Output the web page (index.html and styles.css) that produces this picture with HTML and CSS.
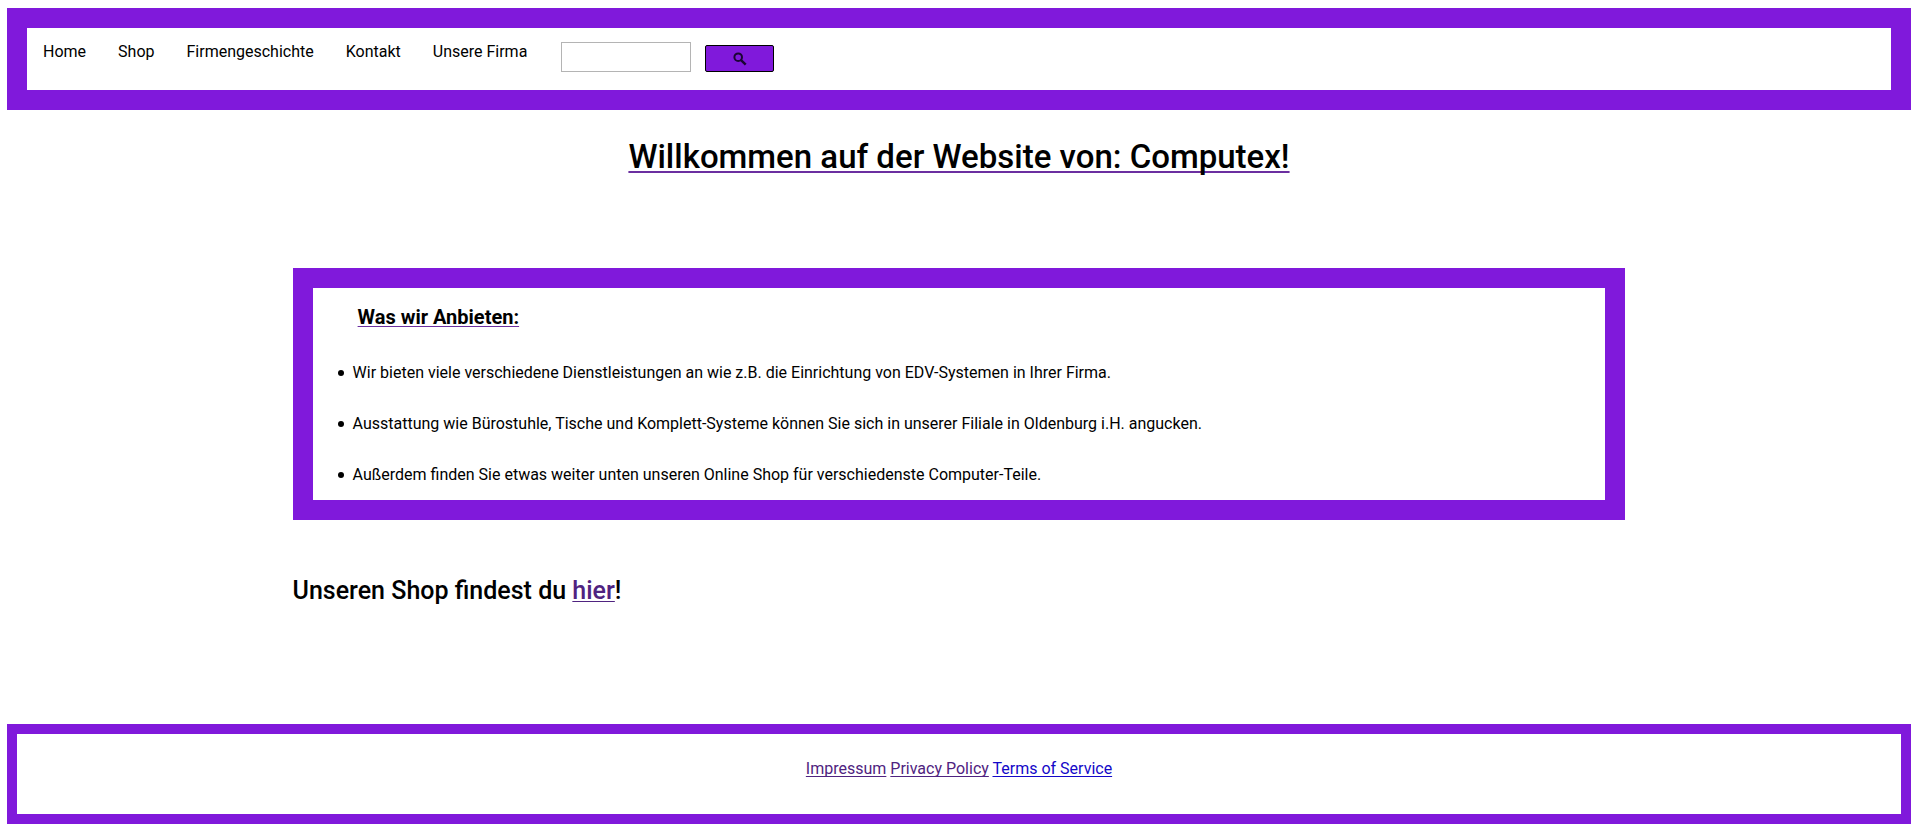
FILE: index.html
```html
<!DOCTYPE html>
<html lang="de">
<head>
<meta charset="utf-8">
<title>Computex</title>
<link rel="stylesheet" href="styles.css">
</head>
<body>
<header class="site-header">
  <nav class="nav">
    <a class="nav-link" href="#">Home</a>
    <a class="nav-link" href="#">Shop</a>
    <a class="nav-link" href="#">Firmengeschichte</a>
    <a class="nav-link" href="#">Kontakt</a>
    <a class="nav-link" href="#">Unsere Firma</a>
  </nav>
  <form class="search">
    <input class="search-input" type="text" aria-label="Suche">
    <button class="search-button" type="button" aria-label="Suchen">
      <svg class="search-icon" viewBox="0 0 14 14" aria-hidden="true">
        <circle cx="5.2" cy="5.2" r="3.8" fill="none" stroke="currentColor" stroke-width="2"/>
        <path d="M7.8 7.8L12.7 12.7" fill="none" stroke="currentColor" stroke-width="2.4"/>
      </svg>
    </button>
  </form>
</header>
<main class="content">
  <h1 class="title">Willkommen auf der Website von: Computex!</h1>
  <section class="offer">
    <h2 class="offer-title">Was wir Anbieten:</h2>
    <ul class="offer-list">
      <li class="offer-item">Wir bieten viele verschiedene Dienstleistungen an wie z.B. die Einrichtung von EDV-Systemen in Ihrer Firma.</li>
      <li class="offer-item">Ausstattung wie Bürostuhle, Tische und Komplett-Systeme können Sie sich in unserer Filiale in Oldenburg i.H. angucken.</li>
      <li class="offer-item">Außerdem finden Sie etwas weiter unten unseren Online Shop für verschiedenste Computer-Teile.</li>
    </ul>
  </section>
  <h2 class="shop-title">Unseren Shop findest du <a class="visited" href="#">hier</a>!</h2>
</main>
<footer class="site-footer">
  <a class="visited" href="#">Impressum</a>
  <a class="visited" href="#">Privacy Policy</a>
  <a class="unvisited" href="#">Terms of Service</a>
</footer>
</body>
</html>
```
FILE: styles.css
```css
* {
  box-sizing: border-box;
}

body {
  margin: 8px 7px 7px;
  background: #fff;
  color: #000;
  font: 16px/19px Roboto, sans-serif;
  text-decoration-skip-ink: none;
  text-underline-offset: 2px;
}

.site-header {
  display: flex;
  align-items: flex-start;
  gap: 18px;
  padding: 14px 0 18px;
  border: 20px solid #8019db;
}

.nav {
  display: flex;
}

.nav-link {
  padding: 0 16px;
  color: #000;
  text-decoration: none;
}

.search {
  display: flex;
  align-items: flex-end;
  gap: 14px;
}

.search-input {
  width: 130px;
  height: 30px;
  border: 1px solid #b4b4b4;
}

.search-button {
  display: flex;
  align-items: center;
  justify-content: center;
  width: 69px;
  height: 27px;
  padding: 0;
  border: 1px solid #000;
  border-radius: 2px;
  background: #8019db;
  color: #1a0533;
}

.search-icon {
  width: 14px;
  height: 14px;
}

.content {
  width: 70%;
  margin: 0 auto;
}

.title {
  margin: 28px 0 92px;
  font-size: 33px;
  line-height: 38px;
  font-weight: 500;
  text-align: center;
  text-decoration: underline 2px #6b2fa0;
  text-underline-offset: 3px;
}

.offer {
  padding: 17px 20px 16px;
  border: 20px solid #8019db;
}

.offer-title {
  margin: 0 0 33px 25px;
  font-size: 20px;
  line-height: 25px;
  font-weight: 700;
  text-decoration: underline 1px #6b2fa0;
}

.offer-list {
  display: grid;
  gap: 32px;
  margin: 0;
  padding-left: 5px;
  list-style: none;
}

.offer-item {
  display: flex;
  align-items: center;
  gap: 9px;
}

.offer-item::before {
  content: "";
  flex: none;
  width: 6px;
  height: 6px;
  border-radius: 50%;
  background: #000;
}

.shop-title {
  margin: 57px 0 119px;
  font-size: 25px;
  line-height: 28px;
  font-weight: 500;
}

.visited {
  color: #4f2380;
  text-decoration-thickness: 1px;
}

.unvisited {
  color: #1408c8;
  text-decoration-thickness: 1px;
}

.site-footer {
  padding: 25px 0 36px;
  border: 10px solid #8019db;
  text-align: center;
}
```
